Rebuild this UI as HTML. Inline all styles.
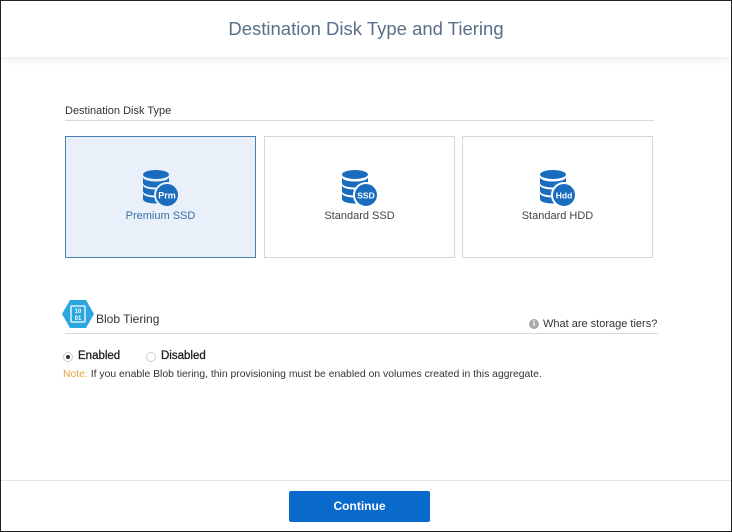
<!DOCTYPE html><html><head><style>
*{margin:0;padding:0;box-sizing:border-box}
body{width:732px;height:532px;position:relative;background:#fff;font-family:"Liberation Sans",sans-serif;overflow:hidden;border:1px solid #222;}
.hdr{position:absolute;left:0;top:0;width:730px;height:56px;background:#fff;box-shadow:0 3px 8px rgba(0,0,0,.08);text-align:center;line-height:56px;font-size:18.5px;color:#5a6f89;}
.lbl{position:absolute;font-size:11px;color:#333}
.line{position:absolute;height:1px;background:#d8d8d8}
.card{position:absolute;top:135px;width:191px;height:122px;border:1px solid #d6d6d6;background:#fff;text-align:center}
.card.sel{background:#e9f0f9;border-color:#4a7fb0}
.card svg{position:absolute;left:77px;top:33px}
.card span{position:absolute;left:0;right:0;top:73px;font-size:11px;color:#444}
.card.sel span{color:#3a6ea5}
.btn{position:absolute;left:288px;top:490px;width:141px;height:31px;background:#0a6acb;border-radius:2px;color:#fff;font-size:12px;font-weight:bold;text-align:center;line-height:31px}
</style></head><body>
<div class="hdr">Destination Disk Type and Tiering</div>
<div class="lbl" style="left:64px;top:104px">Destination Disk Type</div>
<div class="line" style="left:64px;top:119px;width:589px"></div>
<div class="card sel" style="left:64px"><svg width="38" height="38" viewBox="0 0 38 38"><g fill="#1a6cbf"><ellipse cx="13" cy="4.5" rx="13" ry="4.5"/><path d="M0 7c0 6 26 6 26 0v6c0 6-26 6-26 0z"/><path d="M0 15c0 6 26 6 26 0v6c0 6-26 6-26 0z"/><path d="M0 23c0 6 26 6 26 0v6c0 6-26 6-26 0z"/></g><circle cx="24" cy="25" r="12" fill="#1a6cbf" stroke="#e9f0f9" stroke-width="2"/><text x="24" y="28.5" font-size="9" fill="#fff" text-anchor="middle" font-family="Liberation Sans" font-weight="bold">Prm</text></svg><span>Premium SSD</span></div>
<div class="card" style="left:263px"><svg width="38" height="38" viewBox="0 0 38 38"><g fill="#1a6cbf"><ellipse cx="13" cy="4.5" rx="13" ry="4.5"/><path d="M0 7c0 6 26 6 26 0v6c0 6-26 6-26 0z"/><path d="M0 15c0 6 26 6 26 0v6c0 6-26 6-26 0z"/><path d="M0 23c0 6 26 6 26 0v6c0 6-26 6-26 0z"/></g><circle cx="24" cy="25" r="12" fill="#1a6cbf" stroke="#fff" stroke-width="2"/><text x="24" y="28.5" font-size="8.5" fill="#fff" text-anchor="middle" font-family="Liberation Sans" font-weight="bold">SSD</text></svg><span>Standard SSD</span></div>
<div class="card" style="left:461px"><svg width="38" height="38" viewBox="0 0 38 38"><g fill="#1a6cbf"><ellipse cx="13" cy="4.5" rx="13" ry="4.5"/><path d="M0 7c0 6 26 6 26 0v6c0 6-26 6-26 0z"/><path d="M0 15c0 6 26 6 26 0v6c0 6-26 6-26 0z"/><path d="M0 23c0 6 26 6 26 0v6c0 6-26 6-26 0z"/></g><circle cx="24" cy="25" r="12" fill="#1a6cbf" stroke="#fff" stroke-width="2"/><text x="24" y="28.5" font-size="8.5" fill="#fff" text-anchor="middle" font-family="Liberation Sans" font-weight="bold">Hdd</text></svg><span>Standard HDD</span></div>
<svg style="position:absolute;left:61px;top:299px" width="32" height="28" viewBox="0 0 32 28"><polygon points="8,0 24,0 32,14 24,28 8,28 0,14" fill="#2aa7e0"/><rect x="9" y="6" width="14" height="16" rx="1" fill="none" stroke="#fff" stroke-width="1.3"/><text x="16" y="13" font-size="6" fill="#fff" text-anchor="middle" font-family="Liberation Sans" font-weight="bold">10</text><text x="16" y="20" font-size="6" fill="#fff" text-anchor="middle" font-family="Liberation Sans" font-weight="bold">01</text></svg>
<div class="lbl" style="left:95px;top:311px;font-size:12px;color:#333">Blob Tiering</div>
<div class="line" style="left:64px;top:332px;width:593px"></div>
<div style="position:absolute;left:528px;top:318px;width:10px;height:10px;border-radius:50%;background:#aaa;color:#fff;font-size:8px;text-align:center;line-height:10px;font-weight:bold">i</div>
<div class="lbl" style="left:542px;top:317px;font-size:11px;color:#333">What are storage tiers?</div>
<div style="position:absolute;left:62px;top:351px;width:10px;height:10px;border:1px solid #ccc;border-radius:50%"><div style="width:4px;height:4px;background:#333;border-radius:50%;margin:2px"></div></div>
<div class="lbl" style="left:77px;top:349px;font-size:11.5px;color:#222;-webkit-text-stroke:0.3px #222">Enabled</div>
<div style="position:absolute;left:145px;top:351px;width:10px;height:10px;border:1px solid #ccc;border-radius:50%"></div>
<div class="lbl" style="left:160px;top:349px;font-size:11.5px;color:#222;-webkit-text-stroke:0.3px #222">Disabled</div>
<div class="lbl" style="left:62px;top:368px;font-size:10.4px;color:#333"><span style="color:#e8a33c">Note:</span> If you enable Blob tiering, thin provisioning must be enabled on volumes created in this aggregate.</div>
<div class="line" style="left:0;top:479px;width:730px;background:#e4e4e4"></div>
<div class="btn">Continue</div>
</body></html>
